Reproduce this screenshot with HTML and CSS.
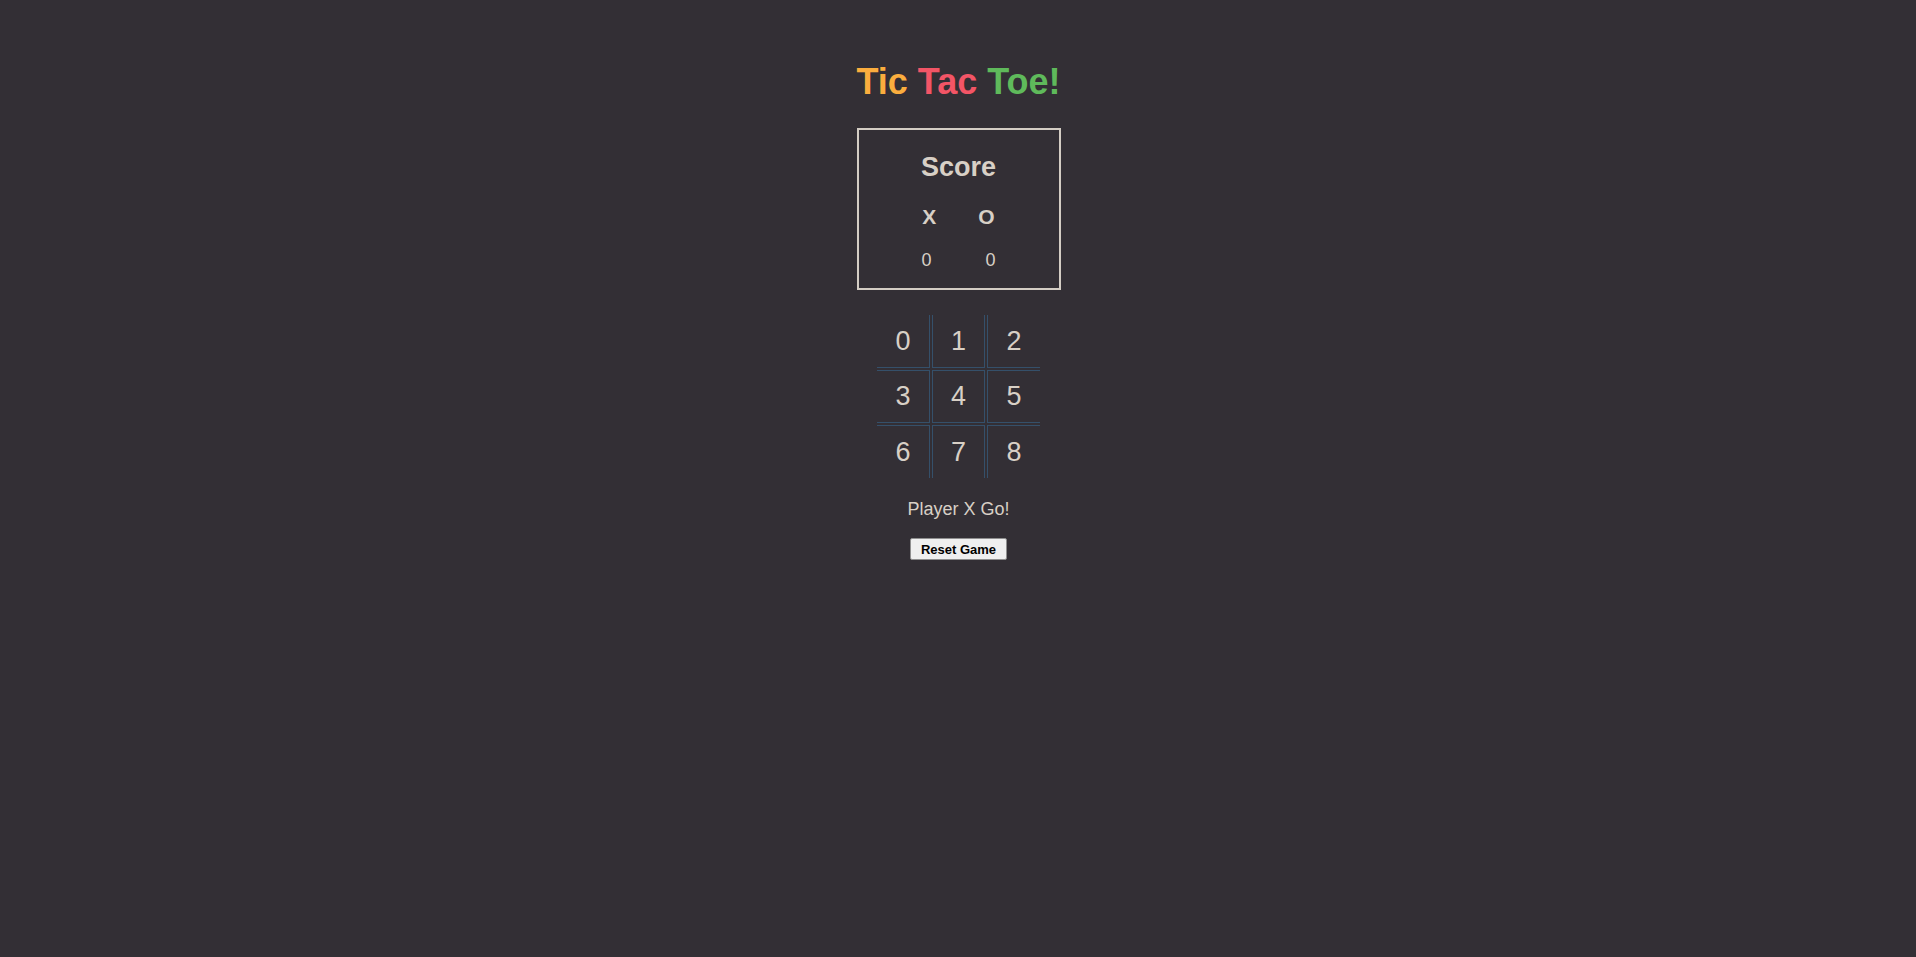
FILE: index.html
```html
<!DOCTYPE html>
<html>
<head>
<meta charset="utf-8">
<title>Tic Tac Toe</title>
<link rel="stylesheet" href="styles.css">
</head>
<body>
<main class="app">
  <h1 class="title"><span class="tic">Tic</span> <span class="tac">Tac</span> <span class="toe">Toe!</span></h1>
  <section class="score">
    <h2 class="score-title">Score</h2>
    <div class="score-players"><span>X</span><span>O</span></div>
    <div class="score-values"><span>0</span><span>0</span></div>
  </section>
  <div class="board">
    <div class="cell c0">0</div>
    <div class="cell c1">1</div>
    <div class="cell c2">2</div>
    <div class="cell c3">3</div>
    <div class="cell c4">4</div>
    <div class="cell c5">5</div>
    <div class="cell c6">6</div>
    <div class="cell c7">7</div>
    <div class="cell c8">8</div>
  </div>
  <p class="status">Player X Go!</p>
  <button class="reset">Reset Game</button>
</main>
</body>
</html>
```

FILE: styles.css
```css
html, body {
  margin: 0;
  padding: 0;
  background: #332f35;
  height: 100%;
}
body {
  font-family: "Liberation Sans", Arial, sans-serif;
  font-size: 18px;
  color: #d8d0c6;
}
.app {
  display: flex;
  flex-direction: column;
  align-items: center;
  padding-top: 62px;
  padding-left: 1px;
}
.title {
  margin: 0;
  font-size: 36px;
  line-height: 40px;
  font-weight: bold;
}
.tic { color: #fbad3e; }
.tac { color: #f35566; }
.toe { color: #5fba5b; }

.score {
  box-sizing: border-box;
  width: 204px;
  margin-top: 26px;
  border: 2px solid #d4cdc4;
  padding: 22px 0 18px;
  display: flex;
  flex-direction: column;
  align-items: center;
}
.score-title {
  margin: 0;
  font-size: 27px;
  line-height: 30px;
  font-weight: bold;
}
.score-players {
  margin-top: 23px;
  display: flex;
  gap: 42px;
  font-size: 21px;
  line-height: 24px;
  font-weight: bold;
}
.score-values {
  margin-top: 21px;
  display: flex;
  gap: 54px;
  font-size: 18px;
  line-height: 20px;
}

.board {
  margin-top: 25px;
  display: grid;
  grid-template-columns: repeat(3, 53px);
  grid-template-rows: repeat(3, 53px);
  gap: 2px;
}
.cell {
  box-sizing: border-box;
  display: flex;
  align-items: center;
  justify-content: center;
  font-size: 27px;
  border: 1px solid #35506a;
}
.c0, .c1, .c2 { border-top: none; }
.c6, .c7, .c8 { border-bottom: none; }
.c0, .c3, .c6 { border-left: none; }
.c2, .c5, .c8 { border-right: none; }

.status {
  margin: 20px 0 0;
  font-size: 18px;
  line-height: 22px;
}
.reset {
  margin-top: 18px;
  font-family: "Liberation Sans", Arial, sans-serif;
  font-size: 13px;
  font-weight: bold;
  color: #000;
  background: #efefef;
  border: 1px solid #8f8f8f;
  border-radius: 2px;
  height: 22px;
  padding: 0 10px;
}
```
